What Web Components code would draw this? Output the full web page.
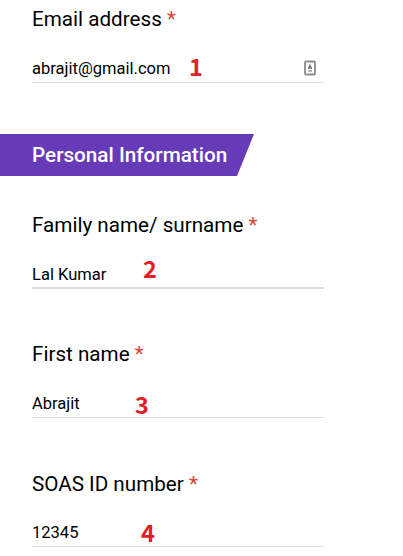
<!DOCTYPE html>
<html lang="en">
<head>
<meta charset="utf-8">
<title>Personal Information</title>
<style>
  body {
    margin: 0;
    background: #fff;
    font-family: Roboto, "Liberation Sans", sans-serif;
    color: #000;
  }
</style>
</head>
<body>

<form-page>
  <form-field required mark="1" mark-x="157" mark-y="-5" icon>
    <span slot="label">Email address</span>
    <span slot="value">abrajit@gmail.com</span>
  </form-field>

  <section-banner>Personal Information</section-banner>

  <form-field required mark="2" mark-x="111" mark-y="-9" active>
    <span slot="label">Family name/ surname</span>
    <span slot="value">Lal Kumar</span>
  </form-field>

  <form-field required mark="3" mark-x="103" mark-y="-2">
    <span slot="label">First name</span>
    <span slot="value">Abrajit</span>
  </form-field>

  <form-field required mark="4" mark-x="109" mark-y="-4" short>
    <span slot="label">SOAS ID number</span>
    <span slot="value">12345</span>
  </form-field>
</form-page>

<script>
// <form-page>: vertical stack of fields and banners
class FormPage extends HTMLElement {
  constructor() {
    super();
    this.attachShadow({ mode: "open" });
  }

  connectedCallback() {
    this.shadowRoot.innerHTML = `
      <style>
        :host {
          display: flex;
          flex-direction: column;
          align-items: flex-start;
          height: 556px;
          padding-top: 5px;
          box-sizing: border-box;
          overflow: hidden;
        }
      </style>
      <slot></slot>
    `;
  }
}

// <section-banner>: purple title with a slanted right edge
class SectionBanner extends HTMLElement {
  constructor() {
    super();
    this.attachShadow({ mode: "open" });
  }

  connectedCallback() {
    this.shadowRoot.innerHTML = `
      <style>
        :host {
          display: flex;
          align-items: center;
          width: 254px;
          height: 42px;
          margin: 51px 0 35px;
          padding-left: 32px;
          box-sizing: border-box;
          background: #673ab7;
          clip-path: polygon(0 0, 100% 0, 237px 100%, 0 100%);
          color: #fff;
          font-size: 20.7px;
          font-weight: 500;
          line-height: 42px;
          white-space: nowrap;
        }
      </style>
      <slot></slot>
    `;
  }
}

// <form-field>: label, value with underline, and a red step number
class FormField extends HTMLElement {
  constructor() {
    super();
    this.attachShadow({ mode: "open" });
  }

  get mark()  { return this.getAttribute("mark")   ?? ""; }
  get markX() { return this.getAttribute("mark-x") ?? "0"; }
  get markY() { return this.getAttribute("mark-y") ?? "0"; }

  connectedCallback() {
    this.render();
  }

  render() {
    this.shadowRoot.innerHTML = `
      <style>
        :host {
          display: block;
          width: 292px;
          margin-left: 32px;
        }

        :host(:not(:first-child)) {
          margin-bottom: 52px;
        }

        .label {
          height: 28px;
          font-size: 20.65px;
          line-height: 28px;
          white-space: nowrap;
        }

        .star {
          color: #db4437;
        }

        .row {
          position: relative;
          display: flex;
          align-items: flex-start;
          justify-content: space-between;
          height: 25px;
          margin-top: 24px;
          font-size: 16.55px;
          line-height: 23px;
          border-bottom: 1px solid #dcdcdc;
        }

        :host([active]) {
          margin-bottom: 51px !important;
        }

        :host([active]) .row {
          height: 24px;
          border-bottom-width: 2px;
        }

        :host([short]) .row {
          height: 24px;
          line-height: 22px;
        }

        .mark {
          position: absolute;
          left: ${this.markX}px;
          top: ${this.markY}px;
          font: 700 23.5px/28px "Noto Sans CJK SC", sans-serif;
          color: #e01f26;
        }

        svg {
          display: block;
          margin: 3px 8px 0 0;
        }
      </style>

      <div class="label">
        <slot name="label"></slot>
        ${this.hasAttribute("required") ? `<span class="star">*</span>` : ""}
      </div>
      <div class="row">
        <slot name="value"></slot>
        ${this.hasAttribute("icon") ? `
          <svg width="12" height="16" viewBox="0 0 12 16">
            <rect x="1" y="1.5" width="10" height="13" rx="1" fill="#fff" stroke="#8c8c8c" stroke-width="1.8"/>
            <path d="M6 3.5 L7.8 8 H4.2 Z" fill="#777"/>
            <rect x="4" y="7" width="4" height="2" fill="#888"/>
            <rect x="4" y="10" width="4" height="1.8" fill="#aaa"/>
          </svg>` : ""}
        <span class="mark">${this.mark}</span>
      </div>
    `;
  }
}

customElements.define("form-page", FormPage);
customElements.define("section-banner", SectionBanner);
customElements.define("form-field", FormField);
</script>
</body>
</html>
